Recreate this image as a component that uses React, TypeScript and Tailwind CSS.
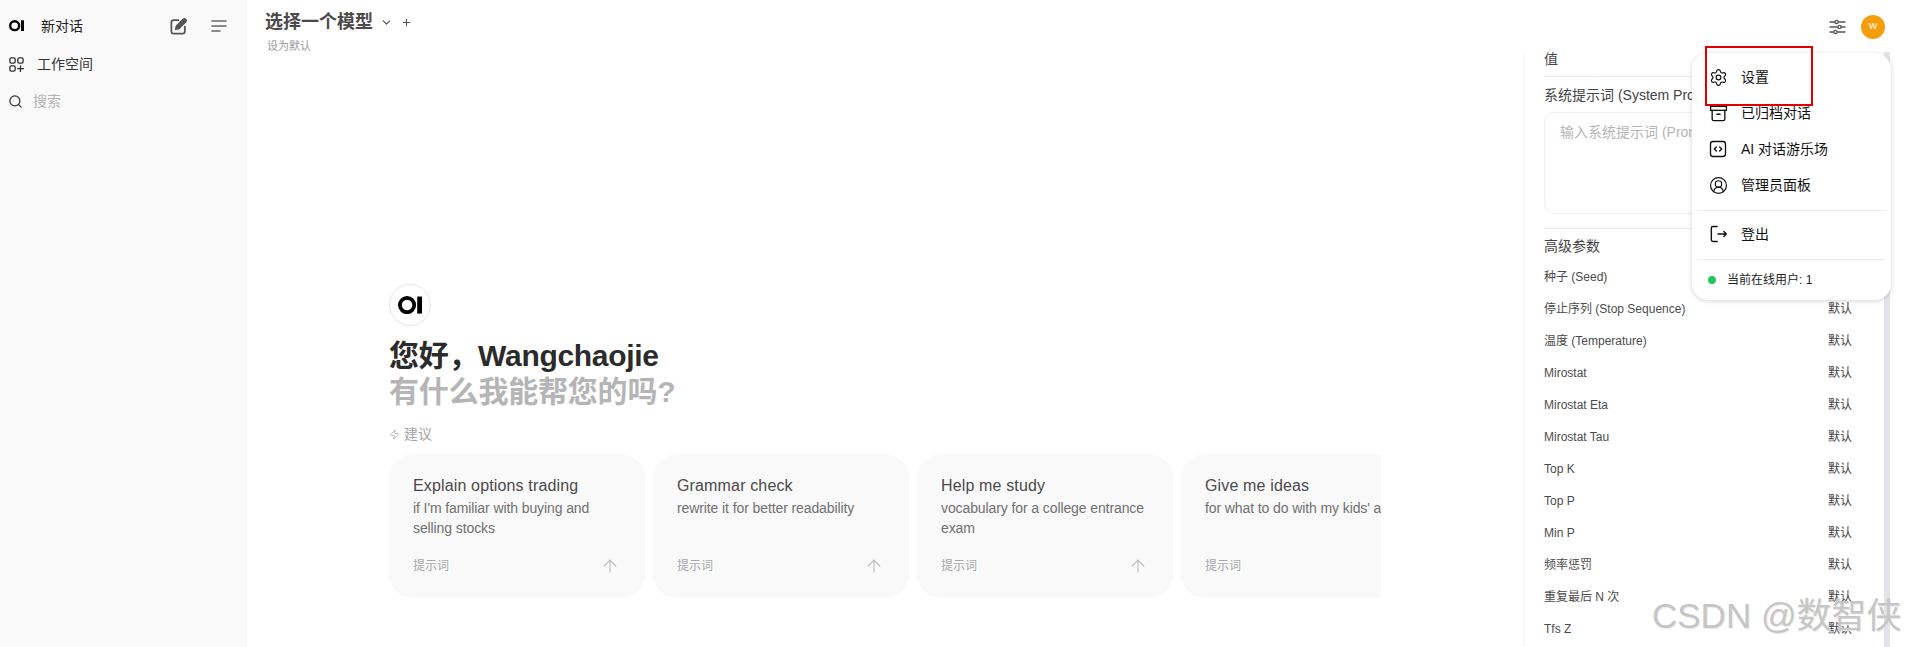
import React from "react";
import { ArrowUp, ChevronDown, CircleUserRound, Plus, Search, Settings, Zap } from "lucide-react";

const FONT = "font-['Liberation_Sans','Noto_Sans_CJK_SC',sans-serif]";

function Logo({ width }: { width: number }) {
  return (
    <svg width={width} height={(width * 17) / 22.5} viewBox="0 0 22.5 17" fill="none">
      <circle cx="8.5" cy="8.5" r="6.7" stroke="#000" strokeWidth="3.6" />
      <rect x="18" y="0.5" width="4.5" height="16" fill="#000" />
    </svg>
  );
}

const params = [
  "种子 (Seed)",
  "停止序列 (Stop Sequence)",
  "温度 (Temperature)",
  "Mirostat",
  "Mirostat Eta",
  "Mirostat Tau",
  "Top K",
  "Top P",
  "Min P",
  "频率惩罚",
  "重复最后 N 次",
  "Tfs Z",
];

const cards = [
  { t: "Explain options trading", s: "if I'm familiar with buying and selling stocks", arrow: true },
  { t: "Grammar check", s: "rewrite it for better readability", arrow: true },
  { t: "Help me study", s: "vocabulary for a college entrance exam", arrow: true },
  { t: "Give me ideas", s: "for what to do with my kids' art", arrow: false },
];

function MenuItem({ icon, label }: { icon: React.ReactNode; label: string }) {
  return (
    <div className="flex h-[36px] items-center gap-[13px] pl-[16px] text-[14px] text-[#111]">
      <span className="flex h-[20px] w-[20px] items-center justify-center">{icon}</span>
      <span className="leading-none">{label}</span>
    </div>
  );
}

export default function App() {
  return (
    <div className={`relative flex h-[647px] w-[1907px] overflow-hidden bg-white ${FONT}`}>
      {/* sidebar */}
      <aside className="flex w-[247px] shrink-0 flex-col bg-[#f9f9f9]">
        <div className="flex h-[52px] items-center pl-[9px] pr-[20px]">
          <Logo width={15} />
          <span className="ml-[17px] text-[14px] text-[#222]">新对话</span>
          <svg className="ml-auto text-[#555]" width="19" height="19" viewBox="0 0 24 24" fill="none" stroke="currentColor" strokeWidth="2.2" strokeLinecap="round" strokeLinejoin="round">
            <path d="M12 4H6a3 3 0 0 0-3 3v11a3 3 0 0 0 3 3h11a3 3 0 0 0 3-3v-6" />
            <path d="M20.5 2.8a2 2 0 0 1 .7 3L12.5 14.5 8.5 15.5l1-4 8.7-8.7a1.7 1.7 0 0 1 2.3 0z" fill="currentColor" />
          </svg>
          <svg className="ml-[23px] text-[#666]" width="16" height="14" viewBox="0 0 16 14" fill="none" stroke="currentColor" strokeWidth="1.5" strokeLinecap="round">
            <path d="M1 2h14M1 7h14M1 12h8" />
          </svg>
        </div>
        <div className="flex h-[24px] items-center pl-[9px]">
          <svg width="15" height="15" viewBox="0 0 17 17" fill="none" stroke="#333" strokeWidth="1.5">
            <rect x="1" y="1" width="6" height="6" rx="1.6" />
            <rect x="10" y="1" width="6" height="6" rx="1.6" />
            <rect x="1" y="10" width="6" height="6" rx="1.6" />
            <path d="M13 10v6.5M9.8 13.2h6.7" strokeLinecap="round" />
          </svg>
          <span className="ml-[13px] text-[14px] text-[#333]">工作空间</span>
        </div>
        <div className="mt-[13px] flex h-[24px] items-center pl-[8px]">
          <Search size={15} strokeWidth={2} className="text-[#333]" />
          <span className="ml-[10px] text-[14px] text-[#b4b4b4]">搜索</span>
        </div>
      </aside>

      {/* main */}
      <main className="flex min-w-0 flex-1 flex-col">
        <header className="flex h-[52px] shrink-0 items-start justify-between pl-[18px] pr-[22px]">
          <div>
            <div className="mt-[11px] flex items-center">
              <span className="text-[18px] font-bold leading-[22px] text-[#4a4a4a]">选择一个模型</span>
              <ChevronDown size={13} strokeWidth={2.2} className="ml-[7px] text-[#555]" />
              <Plus size={11} strokeWidth={2.2} className="ml-[8px] text-[#555]" />
            </div>
            <div className="ml-[2px] mt-[6px] text-[11px] leading-[14px] text-[#999]">设为默认</div>
          </div>
          <div className="mt-[15px] flex items-center">
            <svg width="17" height="16" viewBox="0 0 17 16" fill="none" stroke="#555" strokeWidth="1.3" strokeLinecap="round">
              <path d="M1 3h15M1 8h15M1 13h15" />
              <circle cx="7.5" cy="3" r="1.6" fill="#fff" />
              <circle cx="10.5" cy="8" r="1.6" fill="#fff" />
              <circle cx="6.5" cy="13" r="1.6" fill="#fff" />
            </svg>
            <div className="ml-[15px] flex h-[24px] w-[24px] items-center justify-center rounded-full bg-[#f59e0b] text-[9px] font-bold text-[#fde9c4]">W</div>
          </div>
        </header>

        <div className="flex min-h-0 flex-1">
          {/* center */}
          <section className="min-w-0 flex-1 pl-[142px] pt-[232px]">
            <div className="flex h-[42px] w-[42px] items-center justify-center rounded-full border border-[#e5e5e5]">
              <Logo width={24} />
            </div>
            <div className="mt-[12px] text-[30px] font-bold leading-[36px] tracking-[-0.3px] text-[#2b2b2b]">您好，Wangchaojie</div>
            <div className="text-[30px] font-bold leading-[36px] tracking-[-0.2px] text-[#b5b5b5]">有什么我能帮您的吗?</div>
            <div className="mt-[14px] flex h-[20px] items-center text-[14px] text-[#a3a3a3]">
              <Zap size={11} strokeWidth={1.6} />
              <span className="ml-[4px]">建议</span>
            </div>
            <div className="mt-[10px] flex w-[992px] gap-[8px] overflow-hidden">
              {cards.map((c) => (
                <div key={c.t} className="flex h-[144px] w-[256px] shrink-0 flex-col rounded-[24px] bg-[#f9f9f9] pb-[24px] pl-[24px] pr-[25px] pt-[20px]">
                  <div className="whitespace-nowrap text-[16px] leading-[24px] tracking-[0.15px] text-[#4a4a4a]">{c.t}</div>
                  <div className={`text-[14px] leading-[20px] tracking-[-0.1px] text-[#707070] ${c.arrow ? "" : "whitespace-nowrap"}`}>{c.s}</div>
                  <div className="mt-auto flex items-center justify-between text-[12px] leading-[16px] text-[#a8a8a8]">
                    <span>提示词</span>
                    {c.arrow && <ArrowUp size={20} strokeWidth={1.3} className="-my-[2px] text-[#bdbdbd]" />}
                  </div>
                </div>
              ))}
            </div>
          </section>

          {/* right panel */}
          <section className="relative w-[383px] shrink-0 overflow-hidden border-l border-[#f5f5f5] pl-[19px] pr-[55px]">
            <div className="-mt-[3px] text-[14px] leading-[20px] text-[#444]">值</div>
            <div className="mt-[7px] whitespace-nowrap border-t border-[#ececec] pt-[8px] text-[14px] leading-[20px] text-[#444]">系统提示词 (System Prompt)</div>
            <div className="mt-[7px] h-[102px] overflow-hidden whitespace-nowrap rounded-[10px] border border-[#efefef] pl-[15px] pt-[9px] text-[14px] leading-[20px] text-[#b5b5b5]">输入系统提示词 (Prompt)</div>
            <div className="mt-[14px] border-t border-[#ececec] pt-[7px] text-[14px] leading-[20px] text-[#444]">高级参数</div>
            <div className="mt-[5px]">
              {params.map((p) => (
                <div key={p} className="flex h-[32px] items-center justify-between text-[12px] text-[#4b4b4b]">
                  <span>{p}</span>
                  <span className="text-[#444]">默认</span>
                </div>
              ))}
            </div>
            <div className="absolute bottom-0 right-[17px] top-0 w-[6px] bg-[#e3e3ea]" />
          </section>
        </div>
      </main>

      {/* account menu */}
      <div className="absolute left-[1692px] top-[53px] w-[199px] rounded-[16px] bg-white pt-[6px] shadow-[0_1px_5px_rgba(0,0,0,0.18)]">
        <MenuItem icon={<Settings size={19} strokeWidth={1.5} />} label="设置" />
        <MenuItem
          icon={
            <svg width="19" height="19" viewBox="0 0 24 24" fill="none" stroke="currentColor" strokeWidth="1.7" strokeLinecap="round">
              <rect x="2" y="3" width="20" height="5" />
              <path d="M4 8v11a2 2 0 0 0 2 2h12a2 2 0 0 0 2-2V8M10 13h4" />
            </svg>
          }
          label="已归档对话"
        />
        <MenuItem
          icon={
            <svg width="20" height="20" viewBox="0 0 24 24" fill="none" stroke="currentColor" strokeWidth="1.6" strokeLinecap="round" strokeLinejoin="round">
              <rect x="3" y="3" width="18" height="18" rx="3" />
              <path d="M10 9.5 7.5 12l2.5 2.5M14 9.5l2.5 2.5-2.5 2.5" />
            </svg>
          }
          label="AI 对话游乐场"
        />
        <MenuItem icon={<CircleUserRound size={19} strokeWidth={1.5} />} label="管理员面板" />
        <div className="mx-[5px] mt-[7px] border-t border-[#ececec]" />
        <div className="pb-[7px] pt-[5px]">
          <MenuItem
            icon={
              <svg width="20" height="20" viewBox="0 0 24 24" fill="none" stroke="currentColor" strokeWidth="1.7" strokeLinecap="round" strokeLinejoin="round">
                <path d="M11 21H6a2 2 0 0 1-2-2V5a2 2 0 0 1 2-2h5M12 12h10M19 9l3 3-3 3" />
              </svg>
            }
            label="登出"
          />
        </div>
        <div className="mx-[5px] border-t border-[#ececec]" />
        <div className="flex h-[40px] items-center pl-[16px] text-[12px] text-[#222]">
          <span className="h-[8px] w-[8px] rounded-full bg-[#22c55e]" />
          <span className="ml-[11px]">当前在线用户: 1</span>
        </div>
      </div>

      {/* red annotation */}
      <div className="pointer-events-none absolute left-[1705px] top-[46px] h-[60px] w-[108px] border-2 border-[#e00000]" />

      {/* watermark */}
      <div className="pointer-events-none absolute left-[1652px] top-[594px] whitespace-nowrap text-[35px] leading-[44px] text-[#c6c6c6] [text-shadow:1px_1px_1px_#e8e8e8]">CSDN @数智侠</div>
    </div>
  );
}
